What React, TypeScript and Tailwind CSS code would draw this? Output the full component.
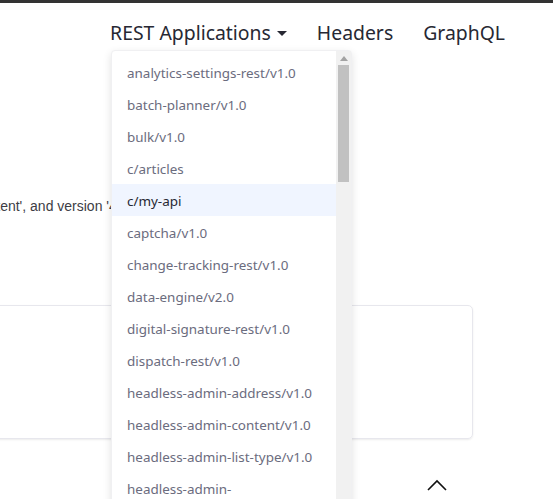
const apps = [
  "analytics-settings-rest/v1.0",
  "batch-planner/v1.0",
  "bulk/v1.0",
  "c/articles",
  "c/my-api",
  "captcha/v1.0",
  "change-tracking-rest/v1.0",
  "data-engine/v2.0",
  "digital-signature-rest/v1.0",
  "dispatch-rest/v1.0",
  "headless-admin-address/v1.0",
  "headless-admin-content/v1.0",
  "headless-admin-list-type/v1.0",
  "headless-admin-",
];

const App = () => {
  return (
    <div className="relative h-[499px] w-[553px] overflow-hidden bg-white font-['Noto_Sans',sans-serif]">
      <div className="h-[3px] bg-[#333333]" />
      <nav className="flex justify-end gap-[30px] pr-[48px] pt-[16px] text-[19.4px] leading-[28px] text-[#272833]">
        <span className="flex items-center">
          REST Applications
          <svg width="10" height="6" viewBox="0 0 10 6" className="ml-[6px] mt-[2px]">
            <path d="M0 0h10L5 5z" fill="#272833" />
          </svg>
        </span>
        <span>Headers</span>
        <span>GraphQL</span>
      </nav>

      <p className="-ml-[250px] mt-[149px] whitespace-nowrap font-['Liberation_Sans',sans-serif] text-[14px] text-[#3d3d45]">
        API for application 'headless-admin-content', and version '4.0'
      </p>

      <div className="-ml-[20px] mt-[88px] h-[134px] w-[493px] rounded-[5px] border border-[#e7e7ed] shadow-[0_1px_2px_rgba(0,0,0,0.08)]" />

      <div className="mt-[40px] flex justify-end pr-[106px]">
        <svg width="20" height="12" viewBox="0 0 20 12">
          <path d="M1 11L10 2l9 9" fill="none" stroke="#111" strokeWidth="1.6" />
        </svg>
      </div>

      <div className="absolute left-[111px] top-[50px] flex h-[470px] w-[241px] rounded-[4px] border border-[#f0f0f2] bg-white shadow-[0_3px_8px_rgba(0,0,0,0.12)]">
        <ul className="flex-1 pt-[5px] text-[13.45px] text-[#6b6c7e]">
          {apps.map((a) => (
            <li
              key={a}
              className={
                a === "c/my-api"
                  ? "h-[32px] bg-[#f0f5ff] pl-[15px] pt-[1px] leading-[32px] text-[#272833]"
                  : "h-[32px] pl-[15px] pt-[1px] leading-[32px]"
              }
            >
              {a}
            </li>
          ))}
        </ul>
        <div className="flex w-[15px] flex-col items-center bg-[#f1f1f1]">
          <svg width="8" height="5" viewBox="0 0 8 5" className="mt-[5px]">
            <path d="M0 5L4 0l4 5z" fill="#a3a3a3" />
          </svg>
          <div className="mt-[4px] h-[117px] w-[11px] bg-[#c1c1c1]" />
        </div>
      </div>
    </div>
  );
};

export default App;
